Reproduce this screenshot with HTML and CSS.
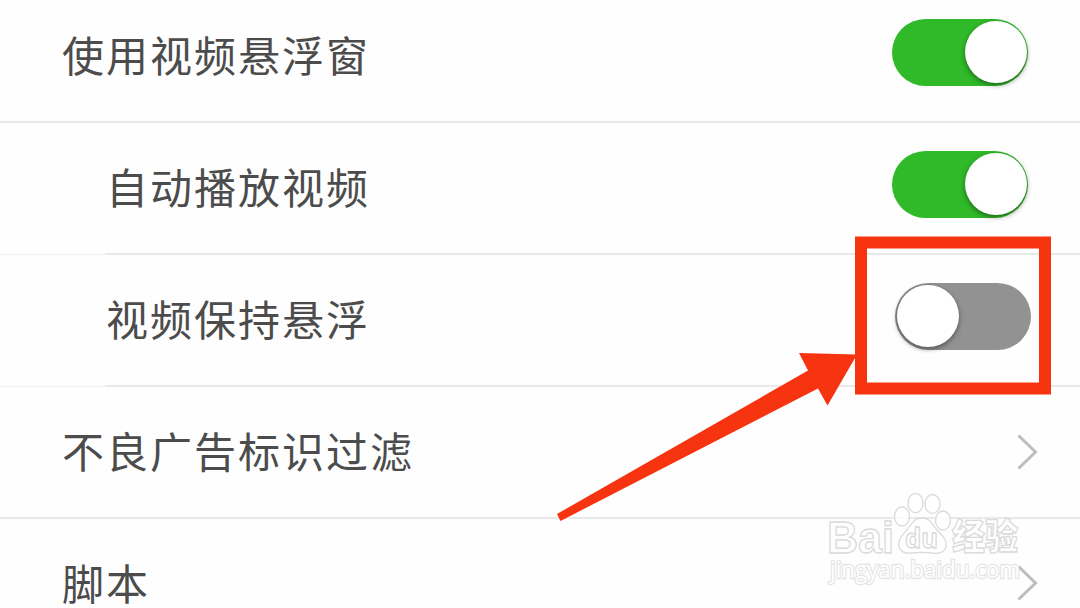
FILE: index.html
```html
<!DOCTYPE html>
<html lang="zh-CN">
<head>
<meta charset="utf-8">
<title>设置</title>
<link rel="stylesheet" href="styles.css">
</head>
<body>
<main class="settings">
  <div class="row">
    <span class="label">使用视频悬浮窗</span>
    <span class="switch on"><span class="knob"></span></span>
  </div>
  <div class="row sub">
    <span class="label">自动播放视频</span>
    <span class="switch on"><span class="knob"></span></span>
  </div>
  <div class="row sub">
    <span class="label">视频保持悬浮</span>
    <span class="switch off"><span class="knob"></span></span>
  </div>
  <div class="row">
    <span class="label">不良广告标识过滤</span>
    <svg class="chevron" width="22" height="38" viewBox="0 0 22 38"><path d="M2.500 2.500 19.500 19 2.500 35.500"/></svg>
  </div>
  <div class="row last">
    <span class="label">脚本</span>
    <svg class="chevron" width="22" height="38" viewBox="0 0 22 38"><path d="M2.500 2.500 19.500 19 2.500 35.500"/></svg>
  </div>
</main>
<svg class="overlay" width="1080" height="608" viewBox="0 0 1080 608">
  <g class="watermark">
    <text class="brand" x="827" y="552.500" textLength="67" lengthAdjust="spacingAndGlyphs">Bai</text>
    <ellipse cx="902" cy="516.500" rx="7.500" ry="9.500"/>
    <ellipse cx="915.500" cy="503" rx="7.500" ry="9.700"/>
    <ellipse cx="932.500" cy="504" rx="7.500" ry="9.500"/>
    <ellipse cx="943" cy="520.500" rx="7.500" ry="9.500"/>
    <path d="M922 518C930 518 932 524 937 530C943 536 947 540 946 546C945 553 938 554 932 553C925 552 919 552 912 553C904 554 898 551 899 543C899 537 905 533 909 527C913 521 916 518 922 518Z"/>
    <text class="du" x="905" y="547.500" textLength="33" lengthAdjust="spacingAndGlyphs">du</text>
    <text class="cn" x="952" y="550" textLength="66" lengthAdjust="spacingAndGlyphs">经验</text>
    <text class="url" x="830" y="578" textLength="190" lengthAdjust="spacingAndGlyphs">jingyan.baidu.com</text>
  </g>
  <rect class="frame" x="861" y="242.500" width="184" height="146"/>
  <path class="arrow" d="M557 514 808 370.500 799 353 857 354.500 827.500 405.500 818 388.500 560.500 521Z"/>
</svg>
</body>
</html>
```
FILE: styles.css
```css
body {
  margin: 0;
  height: 608px;
  overflow: hidden;
  background: #fefefe;
  font-family: "Noto Sans CJK SC", sans-serif;
}

.settings {
  margin-top: -9px;
}

.row {
  box-sizing: border-box;
  height: 132px;
  display: flex;
  align-items: center;
  justify-content: space-between;
  padding: 0 42px 0 62px;
  border-bottom: 2px solid #e9e9e9;
}

.row.sub {
  padding-left: 106px;
  padding-bottom: 2px;
  border-bottom: 0;
  background:
    linear-gradient(#e9e9e9, #e9e9e9) 105px 100% / 100% 2px no-repeat,
    linear-gradient(#f1f1f1, #f1f1f1) 0 100% / 105px 1px no-repeat;
}

.row.last {
  height: 89px;
  padding-top: 41px;
  border-bottom: 0;
}

.label {
  margin-bottom: 4px;
  font-size: 42px;
  line-height: 60px;
  letter-spacing: 2px;
  color: #4c4c4c;
}

.row.last .label {
  line-height: 44px;
}

.switch {
  box-sizing: border-box;
  display: flex;
  width: 136px;
  height: 67px;
  margin: 0 10px 7px 0;
  padding: 2px 1px;
  border-radius: 34px;
}

.switch.on {
  justify-content: flex-end;
  background: #30b929;
}

.switch.off {
  margin-right: 7px;
  padding-left: 2px;
  background: #929292;
}

.knob {
  width: 62px;
  height: 62px;
  border-radius: 50%;
  background: #fff;
  box-shadow: 0 2px 5px rgba(0, 0, 0, 0.45);
}

.chevron {
  fill: none;
  stroke: #bdbdbd;
  stroke-width: 3;
  margin-bottom: 1px;
}

.row.last .chevron {
  margin-bottom: 2px;
}

.overlay {
  position: absolute;
  top: 0;
  left: 0;
}

.watermark {
  fill: #fff;
  fill-opacity: 0.75;
  stroke: #dadada;
  stroke-width: 1.3;
}

.brand {
  font: 700 45px "Liberation Sans", sans-serif;
}

.du {
  font: 700 26px "Open Sans", sans-serif;
}

.cn {
  font: 900 36px "Noto Sans CJK SC", sans-serif;
}

.url {
  font: 400 24px "Open Sans", sans-serif;
  fill-opacity: 1;
  stroke: #e4e4e4;
  stroke-width: 2.4;
  paint-order: stroke;
}

.frame {
  fill: none;
  stroke: #f73410;
  stroke-width: 12;
}

.arrow {
  fill: #f73410;
}
```
